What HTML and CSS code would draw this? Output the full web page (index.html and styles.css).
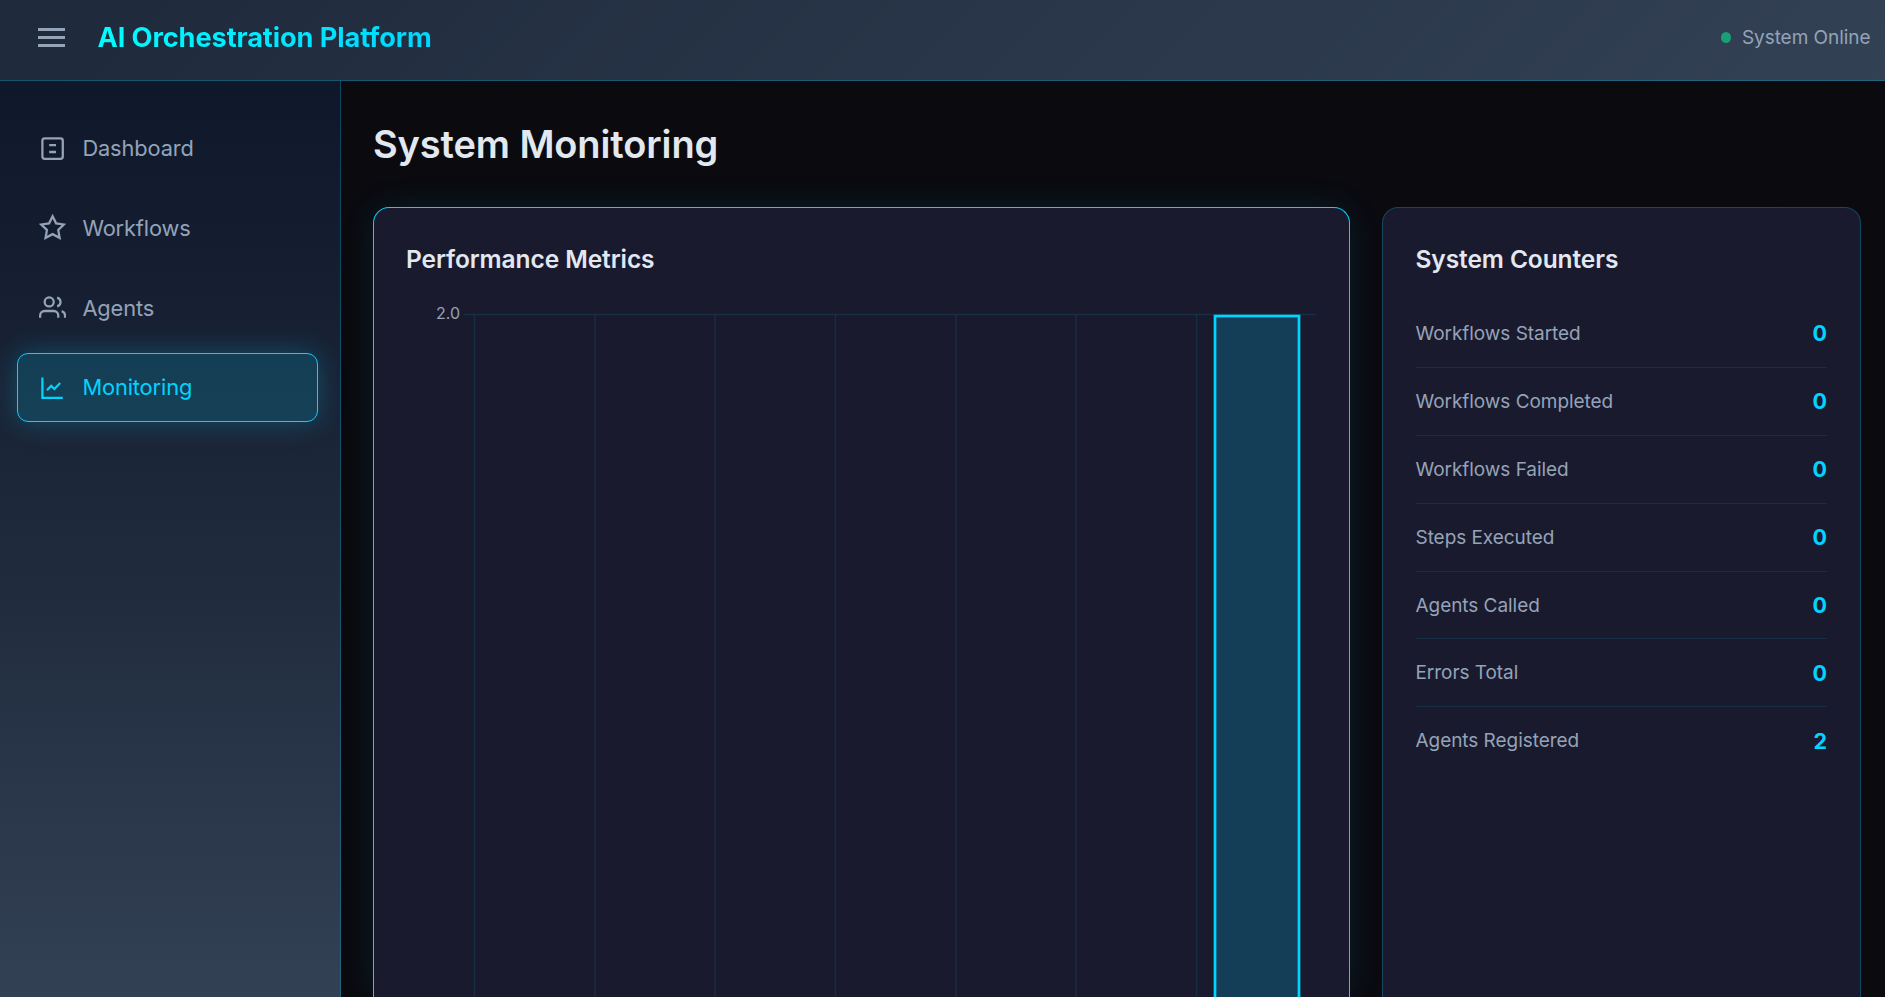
FILE: index.html
```html
<!DOCTYPE html>
<html lang="en">
<head>
<meta charset="utf-8">
<title>AI Orchestration Platform</title>
<link rel="stylesheet" href="styles.css">
</head>
<body>
<header class="topbar">
  <button class="menu-toggle" aria-label="Toggle menu"><span></span><span></span><span></span></button>
  <div class="brand">AI Orchestration Platform</div>
  <div class="status"><span class="status-dot"></span><span>System Online</span></div>
</header>
<div class="layout">
  <nav class="sidebar">
    <a class="nav-item"><svg class="icon" viewBox="0 0 24 24"><rect x="3" y="3" width="18" height="18" rx="2"/><path d="M9 9h6M9 15h6"/></svg><span>Dashboard</span></a>
    <a class="nav-item"><svg class="icon" viewBox="0 0 24 24"><path d="M12 2l3.09 6.26L22 9.27l-5 4.87 1.18 6.88L12 17.77l-6.18 3.25L7 14.14 2 9.27l6.91-1.01z"/></svg><span>Workflows</span></a>
    <a class="nav-item"><svg class="icon" viewBox="0 0 24 24"><path d="M17 21v-2a4 4 0 0 0-4-4H5a4 4 0 0 0-4 4v2"/><circle cx="9" cy="7" r="4"/><path d="M23 21v-2a4 4 0 0 0-3-3.87M16 3.13a4 4 0 0 1 0 7.75"/></svg><span>Agents</span></a>
    <a class="nav-item active"><svg class="icon" viewBox="0 0 24 24"><path d="M3 3v18h18"/><path d="M18.7 8l-5.1 5.2-2.8-2.7L7 14.3"/></svg><span>Monitoring</span></a>
  </nav>
  <main class="content">
    <h1 class="page-title">System Monitoring</h1>
    <div class="cards">
      <section class="card highlighted">
        <h2 class="card-title">Performance Metrics</h2>
        <svg class="chart" width="911" height="703" viewBox="0 0 911 703">
          <g class="grid">
            <path d="M58 20.5H910"/>
            <path d="M68.5 20.5V703M189 20.5V703M309 20.5V703M429.5 20.5V703M550 20.5V703M670 20.5V703M790.5 20.5V703"/>
          </g>
          <text class="tick" x="54" y="24.5" text-anchor="end">2.0</text>
          <rect class="bar" x="809" y="22" width="84" height="820"/>
        </svg>
      </section>
      <section class="card">
        <h2 class="card-title">System Counters</h2>
        <ul class="counters">
          <li><span>Workflows Started</span><b>0</b></li>
          <li><span>Workflows Completed</span><b>0</b></li>
          <li><span>Workflows Failed</span><b>0</b></li>
          <li><span>Steps Executed</span><b>0</b></li>
          <li><span>Agents Called</span><b>0</b></li>
          <li><span>Errors Total</span><b>0</b></li>
          <li><span>Agents Registered</span><b>2</b></li>
        </ul>
      </section>
    </div>
  </main>
</div>
</body>
</html>
```
FILE: styles.css
```css
* { box-sizing: border-box; }
html, body { height: 100%; }
body {
  margin: 0;
  overflow: hidden;
  display: flex;
  flex-direction: column;
  background: #0a0a0f;
  color: #e2e8f0;
  font-family: Inter, "Liberation Sans", sans-serif;
}
.topbar {
  flex: none;
  height: 81px;
  padding: 0 14.5px 6px 38px;
  display: flex;
  align-items: center;
  background: linear-gradient(135deg, #1e293b, #334155);
  border-bottom: 1px solid rgba(0, 212, 255, 0.25);
}
.menu-toggle {
  width: 27px;
  padding: 0;
  border: 0;
  background: none;
  display: flex;
  flex-direction: column;
  gap: 5px;
}
.menu-toggle span { height: 3px; background: #94a3b8; }
.brand {
  margin-left: 32.5px;
  font-size: 27.2px;
  font-weight: 700;
  letter-spacing: -0.1px;
  white-space: nowrap;
  background: linear-gradient(135deg, #00ffff, #00d4ff);
  -webkit-background-clip: text;
  background-clip: text;
  color: transparent;
}
.status {
  margin-left: auto;
  display: flex;
  align-items: center;
  gap: 11px;
  font-size: 19px;
  letter-spacing: -0.05px;
  color: #94a3b8;
}
.status-dot { width: 10px; height: 11px; border-radius: 50%; background: #18a176; }
.layout { flex: 1; display: flex; min-height: 0; }
.sidebar {
  flex: none;
  width: 341px;
  padding: 33px 22px 0 17px;
  display: flex;
  flex-direction: column;
  gap: 11px;
  background: linear-gradient(180deg, #0f172a, #1e293b 50%, #334155);
  border-right: 1px solid rgba(0, 212, 255, 0.25);
}
.nav-item {
  height: 68.7px;
  padding: 0 21px;
  display: flex;
  align-items: center;
  gap: 16.2px;
  border: 1px solid transparent;
  border-radius: 11px;
  font-size: 21.8px;
  letter-spacing: -0.12px;
  color: #94a3b8;
}
.nav-item.active {
  color: #00d4ff;
  background: rgba(0, 212, 255, 0.16);
  border-color: #00d4ff;
  box-shadow: 0 0 27px rgba(0, 212, 255, 0.25);
}
.icon { width: 27.2px; height: 27.2px; fill: none; stroke: currentColor; stroke-width: 2; }
.content { flex: 1; padding: 33px 24px 0 32px; min-width: 0; display: flex; flex-direction: column; }
.page-title {
  flex: none;
  margin: 7px 0 40px;
  font-size: 38px;
  line-height: 46px;
  font-weight: 600;
  letter-spacing: -0.12px;
}
.cards { flex: 1; min-height: 0; display: grid; grid-template-columns: 977px 479px; gap: 32px; }
.card {
  padding: 33px 33px 0 32.5px;
  overflow: hidden;
  border: 1px solid rgba(0, 212, 255, 0.25);
  border-bottom: 0;
  border-radius: 16px 16px 0 0;
  background: #1a1a2e;
}
.card.highlighted {
  padding-left: 32px;
  border-color: #00d4ff;
  box-shadow: 0 0 34px rgba(0, 212, 255, 0.1);
}
.card-title {
  margin: 0;
  padding-top: 3px;
  font-size: 24.5px;
  line-height: 30px;
  font-weight: 600;
  letter-spacing: -0.08px;
}
.chart { display: block; margin-top: 20px; }
.grid path { fill: none; stroke: rgba(0, 212, 255, 0.1); stroke-width: 1.4; }
.tick { font-size: 16px; fill: #94a3b8; }
.bar { fill: rgba(0, 212, 255, 0.2); stroke: #00d4ff; stroke-width: 2.7; }
.counters { list-style: none; margin: 26px 0 0; padding: 0; }
.counters li {
  height: 67.9px;
  display: flex;
  align-items: center;
  justify-content: space-between;
  border-bottom: 1px solid rgba(0, 212, 255, 0.1);
  font-size: 19px;
  letter-spacing: -0.05px;
  color: #94a3b8;
}
.counters li:last-child { border-bottom-color: transparent; }
.counters b { font-size: 21.5px; font-weight: 700; color: #00d4ff; }
```
